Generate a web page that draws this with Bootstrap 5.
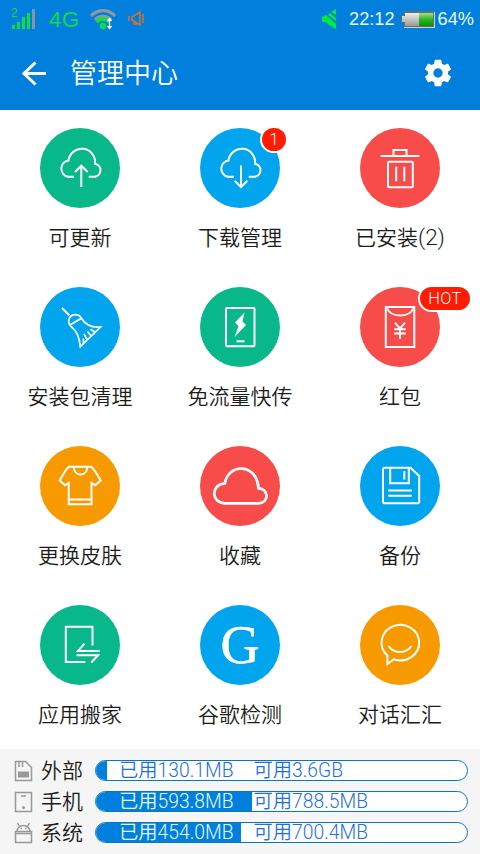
<!DOCTYPE html>
<html lang="zh-CN">
<head>
<meta charset="utf-8">
<meta name="viewport" content="width=device-width, initial-scale=1">
<title>管理中心</title>
<link href="https://cdn.jsdelivr.net/npm/bootstrap@5.3.0/dist/css/bootstrap.min.css" rel="stylesheet">
<style>
body{font-family:"Noto Sans CJK SC",sans-serif;font-weight:350;color:#1c1c1c;width:480px;height:854px;overflow:hidden;background:#fff}
.top-area{height:110px;background:#0080dc;border-bottom:5px solid #007dd6;color:#fff}
.status{height:38px;font:400 18.2px/38px "Liberation Sans",sans-serif;color:#e6f8ff;padding:0 6px 0 11px}
.net{color:#0fdc46;font-size:22px;letter-spacing:.8px;margin:2px 0 0 13px}
.clock{margin-left:10px}
.battery{margin:0 2px 0 5px}
.title-bar{height:67px;padding:2px 26px 0 21px}
.title-bar h1{font-size:27px;font-weight:350;line-height:40px;margin:-2px 0 0 22px}
.tiles{padding-top:18px;height:639px}
.tile{height:159px}
.disc{width:80px;height:80px;border-radius:50%}
.disc svg{display:block;fill:none;stroke:#fff;stroke-width:2}
.green{background:#08b78a}.blue{background:#00a5ee}.red{background:#f74c4a}.orange{background:#f79a00}
.tile-name{font-size:21px;line-height:30px;margin-top:13px;white-space:nowrap}
.tile-name .count{font-family:Roboto,sans-serif;font-weight:350;font-size:22.5px}
.flag{top:-2px;height:27px;border:2px solid #fff;border-radius:14px;background:#ff1c00;color:#fff;font:350 16.500px/23px Roboto,sans-serif;text-align:center}
.flag-count{left:60px;width:28px}
.flag-hot{left:58px;width:54px;letter-spacing:.3px}
.storage{height:105px;background:#f5f5f5;padding:6px 12px 0 14px}
.store-row{height:31px}
.store-name{font-size:21px;line-height:31px;width:62px;padding-left:8px;margin-top:-2px}
.meter{height:21px;border:1px solid #0879b5;border-radius:11px;background:#fff;overflow:hidden}
.meter .progress-bar{background:#0080dc}
.meter-text{inset:0;font:350 19.300px/19px Roboto,"Noto Sans CJK SC",sans-serif;color:#1f6fe0;padding-left:23px;white-space:nowrap}
.used{width:134.500px}
.used.on{color:#e6f8ff}
</style>
<script src="https://cdn.jsdelivr.net/npm/bootstrap@5.3.0/dist/js/bootstrap.bundle.min.js"></script>
</head>
<body>
<header class="top-area">
  <div class="status d-flex align-items-center">
    <svg width="25" height="24" viewBox="0 0 25 24"><g fill="#10dc46"><path d="M1 18h3v4H1zM6 15h3v7H6zM11 10h3v12h-3zM16 6h3v16h-3z"/><text x="0" y="10" font-size="12">2</text></g><path fill="#8795a0" d="M21 2h3v20h-3z"/></svg>
    <span class="net">4G</span>
    <svg class="ms-2" width="30" height="24" viewBox="0 0 30 24" fill="none"><path d="M3 9a16 16 0 0 1 24 0M7 13a11 11 0 0 1 16 0" stroke="#8d98a0" stroke-width="3.4"/><path d="M8.500 15a8.500 8.500 0 0 1 13 0" stroke="#10dc46" stroke-width="3.800"/><circle cx="15" cy="19" r="3.300" fill="#10dc46"/><path d="M21.500 12v9M19.500 14l2-2.500 2 2.500M19.500 19l2 2.500 2-2.500" stroke="#fff" stroke-width="1.300"/></svg>
    <svg class="ms-2" width="20" height="20" viewBox="0 0 20 20" fill="none" stroke="#cf703d" stroke-width="1.600"><path d="M6 8l8-5v13l-8-5zM3 7v5M17 5v9M8 12v3h3"/></svg>
    <svg class="ms-auto" width="18" height="22" viewBox="0 0 18 22" fill="#00eb3c"><path d="M1 9l4-2 10 9v5l-7-4-3-3H1zM7 7l2-2 6 5v3zM10 4l5-3v6z"/></svg>
    <span class="clock">22:12</span>
    <svg class="battery" width="36" height="20" viewBox="0 0 36 20"><defs><linearGradient id="gray" x2="0" y2="1"><stop stop-color="#eee"/><stop offset="1" stop-color="#999"/></linearGradient><linearGradient id="charge" x2="0" y2="1"><stop stop-color="#9be27d"/><stop offset=".5" stop-color="#2fb522"/><stop offset="1" stop-color="#079606"/></linearGradient></defs><path d="M1 6h3V2h31v17H4v-5H1z" fill="#666e72"/><path d="M2 7h3V4h14v13H5v-4H2z" fill="url(#gray)"/><path d="M19 4h14v13H19z" fill="url(#charge)"/><path d="M4 18.500h31M34.500 3v16" stroke="#cbd3d5"/></svg>
    <span>64%</span>
  </div>
  <div class="title-bar d-flex align-items-center">
    <svg width="27" height="28" viewBox="0 0 27 28" fill="none" stroke="#fff" stroke-width="3"><path d="M25 14.500H4M14.500 3.500L3 14.500l11.500 11"/></svg>
    <h1>管理中心</h1>
    <svg class="ms-auto" width="32" height="32" viewBox="0 0 24 24" fill="#fff"><path d="M19.430 12.980c.04-.32.07-.64.07-.98s-.03-.66-.07-.98l2.110-1.650c.19-.15.24-.42.12-.64l-2-3.460c-.12-.22-.39-.3-.61-.22l-2.490 1c-.52-.4-1.080-.73-1.690-.98l-.38-2.650A.488.488 0 0 0 14 2h-4c-.25 0-.46.18-.49.42l-.38 2.650c-.61.25-1.170.59-1.690.98l-2.490-1c-.23-.09-.49 0-.61.22l-2 3.460c-.13.22-.07.49.12.64l2.110 1.650c-.04.32-.07.65-.07.98s.03.66.07.98l-2.110 1.650c-.19.15-.24.42-.12.64l2 3.460c.12.22.39.3.61.22l2.490-1c.52.4 1.080.73 1.690.98l.38 2.650c.03.24.24.42.49.42h4c.25 0 .46-.18.49-.42l.38-2.650c.61-.25 1.170-.59 1.690-.98l2.490 1c.23.09.49 0 .61-.22l2-3.460c.12-.22.07-.49-.12-.64zM12 15.500a3.500 3.500 0 1 1 0-7 3.500 3.500 0 0 1 0 7z"/></svg>
  </div>
</header>
<main class="tiles">
  <div class="row g-0">
    <div class="col-4 tile d-flex flex-column align-items-center">
      <div class="disc green"><svg viewBox="0 0 80 80"><path d="M34 48.700h-6a8.200 8.200 0 0 1 .5-16.200 13.300 13.300 0 0 1 26.500 3.200a6.600 6.600 0 0 1 0 13h-6.300M41.300 59V38M35 44l6.300-6.300 6.400 6.300"/></svg></div>
      <div class="tile-name">可更新</div>
    </div>
    <div class="col-4 tile d-flex flex-column align-items-center">
      <div class="disc blue position-relative"><svg viewBox="0 0 80 80"><path d="M34 48.700h-6a8.200 8.200 0 0 1 .5-16.200 13.300 13.300 0 0 1 26.500 3.200a6.600 6.600 0 0 1 0 13h-6.300M41 37.500V59M34.700 52.800l6.300 6.300 6.300-6.300"/></svg><span class="flag flag-count position-absolute">1</span></div>
      <div class="tile-name">下载管理</div>
    </div>
    <div class="col-4 tile d-flex flex-column align-items-center">
      <div class="disc red"><svg viewBox="0 0 80 80"><path d="M20.700 28H59.300M33.500 28v-6h13v6M36.200 38.700v14.500M44.300 38.700v14.500"/><rect x="28" y="33.800" width="24.800" height="25.500" rx="1"/></svg></div>
      <div class="tile-name">已安装<span class="count">(2)</span></div>
    </div>
    <div class="col-4 tile d-flex flex-column align-items-center">
      <div class="disc blue"><svg viewBox="0 0 80 80"><path d="M22 21l7.300 7.300"/><path stroke-width="1.700" d="M31 39.500C26.500 35 29 28.500 34.500 27.700c3-.4 5.500 1 6.800 3.600L30 38M31 39.500c5.500 4 8.500 10 9.300 20.200L60.500 40c-9 .8-15-2-19.200-8.700M43.700 57l-.5-5.500M47.500 53.300l-3.500-6.500M51.500 49.500l-4-5M55.500 45.500l-5-3.300"/></svg></div>
      <div class="tile-name">安装包清理</div>
    </div>
    <div class="col-4 tile d-flex flex-column align-items-center">
      <div class="disc green"><svg viewBox="0 0 80 80"><rect x="26" y="21" width="28.500" height="38.300" rx="1"/><path fill="#fff" stroke="none" d="M44.500 25.500L35 35.500l3.500 3.800L34.500 50l11.500-12-3.500-3.500z"/><path d="M36.500 54.300h8"/></svg></div>
      <div class="tile-name">免流量快传</div>
    </div>
    <div class="col-4 tile d-flex flex-column align-items-center">
      <div class="disc red position-relative"><svg viewBox="0 0 80 80"><rect x="25.800" y="20" width="28.500" height="40"/><path d="M27 21c4 10 22.500 10 26.500 0M35 35.700l5 6 5-6M40 41.500V52M34.200 42.200h11.600M34.200 46.500h11.600"/></svg><span class="flag flag-hot position-absolute">HOT</span></div>
      <div class="tile-name">红包</div>
    </div>
    <div class="col-4 tile d-flex flex-column align-items-center">
      <div class="disc orange"><svg viewBox="0 0 80 80"><path d="M29 20.800h22.300c3 2.500 5.500 7 9.400 13.700l-5.500 4.700-3.700-2.200v21.300H28.700V37L25 39.200l-5.300-4.700c3.500-6.500 6-11 9.300-13.700zM33.800 21c.5 10 13 10 13.500 0M28.700 53.500h22.800"/></svg></div>
      <div class="tile-name">更换皮肤</div>
    </div>
    <div class="col-4 tile d-flex flex-column align-items-center">
      <div class="disc red"><svg viewBox="0 0 80 80"><path stroke-width="2.700" d="M24.500 57.300C10.500 56.500 11 38 24.800 37.500C28 17 57 16.500 58.500 42.300c10.500.5 11 14.500 0 15z"/></svg></div>
      <div class="tile-name">收藏</div>
    </div>
    <div class="col-4 tile d-flex flex-column align-items-center">
      <div class="disc blue"><svg viewBox="0 0 80 80"><path d="M24 21.800h26.500L59.200 30v26.300l-1 1H24l-1-1V22.800zM30.200 22v15.200h18.600V22M44.300 25v8.500M28.300 44.500h23.400M28.300 49.800h23.400"/></svg></div>
      <div class="tile-name">备份</div>
    </div>
    <div class="col-4 tile d-flex flex-column align-items-center">
      <div class="disc green"><svg viewBox="0 0 80 80"><path d="M52.500 40.500V21.800H25.800V57h19.500M44.500 38.700L38 46h21.700M36.500 50.300H58l-6.700 7.200"/></svg></div>
      <div class="tile-name">应用搬家</div>
    </div>
    <div class="col-4 tile d-flex flex-column align-items-center">
      <div class="disc blue"><svg viewBox="0 0 80 80"><text x="40" y="57.500" text-anchor="middle" fill="#fff" stroke="#fff" stroke-width=".6" font-family="Liberation Serif,serif" font-weight="400" font-size="54">G</text></svg></div>
      <div class="tile-name">谷歌检测</div>
    </div>
    <div class="col-4 tile d-flex flex-column align-items-center">
      <div class="disc orange"><svg viewBox="0 0 80 80"><path d="M27.400 50.500A18.800 17.800 0 1 1 33.800 54.300L27.400 59zM28.700 41c4.500 8 18 8 22.500 0"/></svg></div>
      <div class="tile-name">对话汇汇</div>
    </div>
  </div>
</main>
<footer class="storage">
  <div class="store-row d-flex align-items-center">
    <svg class="flex-shrink-0" width="19" height="22" viewBox="0 0 19 22" fill="none" stroke="#999" stroke-width="1.500"><path d="M1.500 1.500h10l6 6v13h-16zM5 2v5M8.500 2v5"/><path d="M4 11.500h11v6H4z" fill="#999" stroke="none"/></svg>
    <div class="store-name flex-shrink-0">外部</div>
    <div class="meter position-relative flex-grow-1"><div class="progress-bar h-100" style="width:3%"></div><div class="meter-text position-absolute d-flex"><span class="used">已用130.1MB</span><span>可用3.6GB</span></div></div>
  </div>
  <div class="store-row d-flex align-items-center">
    <svg class="flex-shrink-0" width="19" height="22" viewBox="0 0 19 22" fill="none" stroke="#999" stroke-width="1.500"><path d="M1.500 1.500h16v19h-16zM7 5h5"/><circle cx="9.500" cy="16.500" r="1.500" fill="#999" stroke="none"/></svg>
    <div class="store-name flex-shrink-0">手机</div>
    <div class="meter position-relative flex-grow-1"><div class="progress-bar h-100" style="width:42%"></div><div class="meter-text position-absolute d-flex"><span class="used on">已用593.8MB</span><span>可用788.5MB</span></div></div>
  </div>
  <div class="store-row d-flex align-items-center">
    <svg class="flex-shrink-0" width="19" height="22" viewBox="0 0 19 22" fill="none" stroke="#999" stroke-width="1.500"><path d="M3 9.500a6.500 6 0 0 1 13 0M1.500 11.500h16v9h-16zM5.500 4.500L3.500 1M13.500 4.500l2-3.500M1.500 11.500V9.500h16v2"/><path d="M6.500 6.500h1.500M11 6.500h1.500"/></svg>
    <div class="store-name flex-shrink-0">系统</div>
    <div class="meter position-relative flex-grow-1"><div class="progress-bar h-100" style="width:39%"></div><div class="meter-text position-absolute d-flex"><span class="used on">已用454.0MB</span><span>可用700.4MB</span></div></div>
  </div>
</footer>
</body>
</html>
